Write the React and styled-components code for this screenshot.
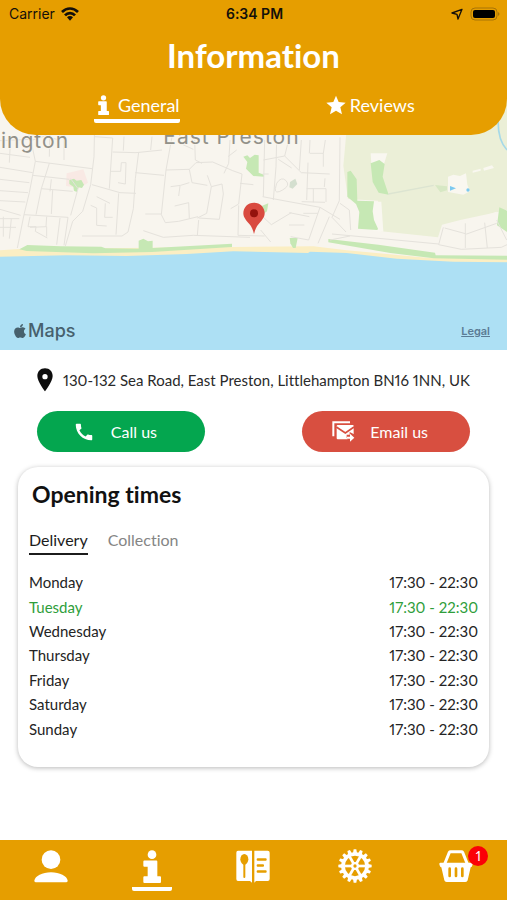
import React, { useState } from 'react';
import styled, { createGlobalStyle } from 'styled-components';
import { FaApple } from 'react-icons/fa';
import { MdCall } from 'react-icons/md';

const ORANGE = '#e69e00';
const SYSTEM_FONT = "Inter, 'Liberation Sans', sans-serif";

const GlobalStyle = createGlobalStyle`
  *, *::before, *::after { box-sizing: border-box; }
  body {
    margin: 0;
    background: #fff;
    color: #1c1c1c;
    font-family: Lato, 'Open Sans', sans-serif;
    font-variant-ligatures: none;
    font-variant-numeric: proportional-nums;
  }
  button { font: inherit; border: 0; padding: 0; background: none; cursor: pointer; }
  svg { display: block; flex: none; }
`;

const Page = styled.div`
  min-height: 100vh;
  display: flex;
  flex-direction: column;
`;

/* ---------- header ---------- */

const Header = styled.header`
  position: relative;
  z-index: 1;
  height: 135px;
  background: ${ORANGE};
  border-radius: 0 0 36px 36px;
  color: #fff;
`;

const StatusBar = styled.div`
  height: 28px;
  padding: 0 7px 0 9px;
  display: grid;
  grid-template-columns: 1fr auto 1fr;
  align-items: center;
  font-family: ${SYSTEM_FONT};
  font-size: 14px;
  line-height: 28px;
  color: #14100a;
`;

const StatusGroup = styled.div`
  display: flex;
  align-items: center;
  gap: 6px;
  justify-content: ${(p) => (p.$end ? 'flex-end' : 'flex-start')};
`;

const Clock = styled.time`
  font-weight: 600;
`;

const Title = styled.h1`
  margin: 0;
  font-size: 33px;
  line-height: 54px;
  font-weight: 700;
  text-align: center;
`;

const HeaderTabs = styled.nav`
  display: grid;
  grid-template-columns: 1fr 1fr;
  justify-items: center;
  padding: 11px 20px 0;
`;

const HeaderTab = styled.button`
  && { padding: 0 0 3px ${(p) => (p.$indent ? '4px' : '0')}; }
  height: 30px;
  display: flex;
  align-items: center;
  gap: ${(p) => (p.$indent ? '9px' : '4px')};
  color: #fff;
  font-size: 18px;
  line-height: 22px;
  border-bottom: 4px solid ${(p) => (p.$active ? '#fff' : 'transparent')};
  border-radius: 2px;
`;

/* ---------- map ---------- */

const MapPanel = styled.section`
  position: relative;
  height: 250px;
  margin-top: -35px;
  background: #ade0f4;
`;

const MapDrawing = styled.svg`
  width: 100%;
  height: 100%;
`;

const MapCaption = styled.div`
  position: absolute;
  inset: auto 17px 7px 12px;
  display: flex;
  justify-content: space-between;
  align-items: center;
  font-family: ${SYSTEM_FONT};
  color: #47616d;
`;

const MapBrand = styled.span`
  display: flex;
  align-items: center;
  font-size: 18px;
  line-height: 24px;
  font-weight: 500;
`;

const LegalLink = styled.a`
  font-size: 11px;
  line-height: 16px;
  font-weight: 600;
  color: #5b7c95;
`;

/* ---------- contact ---------- */

const Content = styled.main`
  flex: 1;
  padding: 18px 18px 24px;
`;

const Address = styled.address`
  display: flex;
  align-items: center;
  gap: 10px;
  padding: 0 19px;
  font-style: normal;
  font-size: 15px;
  line-height: 24px;
  color: #2a2a2a;
  white-space: nowrap;
`;

const Actions = styled.div`
  display: flex;
  justify-content: space-between;
  padding: 0 19px;
  margin: 19px 0 15px;
`;

const ActionButton = styled.button`
  && { padding: 0 ${(p) => (p.$inset ? '42px 0 30px' : '48px 0 36px')}; }
  width: 168px;
  height: 41px;
  display: flex;
  align-items: center;
  justify-content: space-between;
  border-radius: 21px;
  background: ${(p) => p.$color};
  color: #fff;
  font-size: 16px;
  line-height: 20px;
`;

/* ---------- opening times ---------- */

const Card = styled.section`
  min-height: 300px;
  padding: 12px 11px 24px;
  border-radius: 20px;
  background: #fff;
  box-shadow: 0 1px 5px rgba(0, 0, 0, 0.28);
`;

const CardTitle = styled.h2`
  margin: 0 0 18px 3px;
  font-size: 23px;
  line-height: 30px;
  font-weight: 700;
  color: #111;
`;

const CardTabs = styled.div`
  display: flex;
  gap: 20px;
  margin-bottom: 15px;
`;

const CardTab = styled.button`
  height: 28px;
  font-size: 16px;
  line-height: 24px;
  color: ${(p) => (p.$active ? '#1c1c1c' : '#858585')};
  border-bottom: 2px solid ${(p) => (p.$active ? '#1c1c1c' : 'transparent')};
`;

const Hours = styled.table`
  width: 100%;
  height: 171px;
  border-collapse: collapse;
  font-size: 15px;
  line-height: 20px;
`;

const HoursRow = styled.tr`
  color: ${(p) => (p.$today ? '#2f9e3b' : '#242424')};
`;

const Day = styled.th`
  padding: 0;
  font-weight: 400;
  text-align: left;
`;

const Time = styled.td`
  padding: 0;
  text-align: right;
`;

/* ---------- bottom bar ---------- */

const BottomBar = styled.nav`
  height: 60px;
  display: grid;
  grid-template-columns: repeat(5, 1fr);
  justify-items: center;
  background: ${ORANGE};
`;

const BottomItem = styled.button`
  position: relative;
  width: 40px;
  height: 51px;
  display: flex;
  justify-content: center;
  align-items: center;
  color: #fff;
  border-bottom: 4px solid ${(p) => (p.$active ? '#fff' : 'transparent')};
  border-radius: 2px;
  && { padding-top: 5px; }
`;

const Badge = styled.span`
  position: absolute;
  top: 6px;
  right: -12px;
  width: 20px;
  height: 20px;
  border-radius: 50%;
  background: #fb0007;
  color: #fff;
  font-size: 13px;
  line-height: 20px;
  text-align: center;
`;

/* ---------- icons ---------- */

const WifiIcon = () => (
  <svg width="18" height="14" viewBox="0 0 54 42" fill="none" stroke="#14100a" strokeWidth="8" aria-hidden="true">
    <path d="M3 15C17 1 37 1 51 15" />
    <path d="M12 25C20 16 34 16 42 25" />
    <path d="M27 41l-9-10c5-5 13-5 18 0z" fill="#14100a" stroke="none" />
  </svg>
);

const LocationIcon = () => (
  <svg width="12" height="12" viewBox="0 0 36 36" fill="none" stroke="#14100a" strokeWidth="4" strokeLinejoin="round" aria-hidden="true">
    <path d="M33 4L3 15l15 4 3 14z" />
  </svg>
);

const BatteryIcon = () => (
  <svg width="31" height="14" viewBox="0 0 31 14" aria-hidden="true">
    <rect x="2" y="1" width="26" height="12" rx="4" fill="none" stroke="#a87407" />
    <rect x="4" y="3" width="22" height="8" rx="2" fill="#000" />
    <path d="M29 5v4c2-1 2-3 0-4z" fill="#a87407" />
  </svg>
);

const InfoIcon = ({ width, height }) => (
  <svg width={width} height={height} viewBox="0 0 54 98" preserveAspectRatio="none" fill="currentColor" aria-hidden="true">
    <circle cx="27" cy="14" r="13" />
    <path d="M4 31h36q3 0 3 3v44h8q3 0 3 3v14q0 3-3 3H4q-3 0-3-3V81q0-3 3-3h10V50H4q-3 0-3-3V34q0-3 3-3z" />
  </svg>
);

const StarIcon = () => (
  <svg width="20" height="20" viewBox="0 0 60 58" fill="currentColor" aria-hidden="true">
    <path d="M30 1l8 19 21 2-16 14 5 21-18-11-18 11 5-21L1 22l21-2z" />
  </svg>
);

const PlaceIcon = () => (
  <svg width="16" height="24" viewBox="0 0 48 72" aria-hidden="true">
    <path d="M24 1C10 1 1 11 1 24c0 17 23 46 23 46s23-29 23-46C47 11 38 1 24 1zm0 17a8 8 0 110 16 8 8 0 010-16z" fill="#0d0d0d" fillRule="evenodd" />
  </svg>
);

const MailIcon = () => (
  <svg width="23" height="21" viewBox="0 0 69 63" aria-hidden="true">
    <path d="M4 46V4h50" fill="none" stroke="#fff" strokeWidth="6" />
    <rect x="14" y="12" width="51" height="43" rx="3" fill="#fff" />
    <path d="M13 18l27 18 26-18" fill="none" stroke="#d84f40" strokeWidth="5" />
    <path d="M44 50V41h9v-8l16 8v22H50z" fill="#d84f40" />
    <path d="M45 47h9v-9l13 12-13 12v-9h-9z" fill="#fff" />
  </svg>
);

const PersonIcon = () => (
  <svg width="34" height="33" viewBox="0 0 102 99" fill="currentColor" aria-hidden="true">
    <circle cx="51" cy="29" r="28" />
    <path d="M1 92c2-14 24-25 50-25s48 11 50 25q0 5-5 5H6q-5 0-5-5z" />
  </svg>
);

const MenuBookIcon = () => (
  <svg width="34" height="33" viewBox="0 0 102 99" aria-hidden="true">
    <path d="M6 2h42v96L42 93H6q-5 0-5-6V8q0-6 5-6zM55 2h40q6 0 6 6v79q0 6-6 6H60L55 98z" fill="#fff" />
    <g fill={ORANGE}>
      <ellipse cx="25" cy="28" rx="12" ry="16" />
      <rect x="22" y="40" width="6" height="44" rx="3" />
      <rect x="62" y="25" width="30" height="7" rx="3" />
      <rect x="62" y="43" width="22" height="7" rx="3" />
      <rect x="62" y="61" width="30" height="7" rx="3" />
    </g>
  </svg>
);

const TEETH = Array.from({ length: 16 }, (_, i) => i * 22.5);
const SPOKES = [0, 60, 120];

const GearIcon = () => (
  <svg width="34" height="34" viewBox="-51 -51 102 102" fill="none" stroke="currentColor" aria-hidden="true">
    <circle r="36" strokeWidth="11" />
    {TEETH.map((a) => (
      <path key={a} d="M-6-39L-4-50H4L6-39z" fill="currentColor" stroke="none" transform={`rotate(${a})`} />
    ))}
    {SPOKES.map((a) => (
      <path key={a} d="M-32 0H32" strokeWidth="8" transform={`rotate(${a})`} />
    ))}
    <circle r="12" fill="currentColor" stroke="none" />
    <circle r="5" fill={ORANGE} stroke="none" />
  </svg>
);

const BasketIcon = () => (
  <svg width="34" height="33" viewBox="0 0 102 99" aria-hidden="true">
    <path d="M17 42L31 7q1-2 4-2h32q3 0 4 2l14 35" fill="none" stroke="#fff" strokeWidth="9" />
    <path d="M4 38h94q4 0 3 5l-2 6q-1 3-4 3l-9 39q-1 5-7 5H23q-6 0-7-5L7 52q-3 0-4-3l-2-6q-1-5 3-5z" fill="#fff" />
    <path d="M32 56v22M51 56v22M70 56v22" stroke={ORANGE} strokeWidth="8" strokeLinecap="round" />
  </svg>
);

/* ---------- map drawing: three units to one pixel ---------- */

const CoastMap = () => (
  <MapDrawing viewBox="0 -60 1521 750" preserveAspectRatio="xMidYMid slice" role="img" aria-label="Map of East Preston">
    <rect y="-60" width="1521" height="500" fill="#f8f5ee" />
    <path d="M200 160l50-12 14 40-24 16-42-6z" fill="#f9e9e4" />
    <path d="M1048-60h473v330l-140 30-55 14-12 38-170-18-10-92-90-5-14-100z" fill="#ebefd7" />
    <path d="M1112 100l50 0-10 32h-38zM1120 245l24 0 6 90-32-2zM1344 170l16-6 20 4 18-8 4 34 8 20-20 10-46-8zM1418 152l24-6v6l-24 6zM1450 144l26-8 6 8-30 8z" fill="#f9f7f0" />
    <path d="M1330 320l50-15 80-20 30-10 31 40v98l-210-30z" fill="#f8f5ee" />
    <path d="M0 391l60-4 640-6 240-2 100 12 240 22 241 2v30H0z" fill="#fbeec3" />

    <g fill="#c6e8b4">
      <path d="M208 180l14-4 8 6 14-2 8 14-6 10-10-2-6 14-8-4-2-12-12-8z" />
      <path d="M58 388l24-13 100 4 122 1 12 5 100 1v-24l14-6 14 8 14-2v22l238-13v10l-240 15-176 4-200-7z" />
      <path d="M730 110l12-4 8 8 14-10 12 2v52l16 6v6l-32-2-22-22 4-20z" />
      <path d="M785 258l20-8-4 24-14 10z" />
      <path d="M869 354h24l-6 30h-8l-8-14z" />
      <path d="M1042 156l10-4 18 26 2 64 50 2-4 30 4 26 12 26-2 4-58-4 4-50-10-24-26-22z" />
      <path d="M1112 130l26-10 16 12-6 38 18 54-30-6-18-32z" />
      <path d="M985 357l150 17 170 24 2 8 214 1v12l-220-4-130-16-186-32z" />
      <path d="M1498 262l23 10v64l-30-20z" />
      <path d="M1305 195l36 4v12l-20 6z" fill="#d7e8c4" />
      <path d="M870 186l16-10 6 16-14 14-10-4z" fill="#d4dfcf" />
    </g>

    <g fill="none" stroke="#e5e2dc" strokeWidth="3" strokeLinejoin="round">
      <path d="M0 62l92-4 14 66 170 22M0 100l90 12M0 142l98 16M0 178l88 10M0 212l84 6M0 242l76 4M106 124L88 218 72 284 52 384M98 166l110 12M32 50l-4 78M80 20l12 42 44-14 40 12M150 10l-2 100M192 10v110M284 10l-2 100-10 84-24 80-30 30-22 74" />
      <path d="M148 130l-24 76-16 78M124 206l94 8M158 210l-4 72M154 178l-4 36M212 176l22 30-22 80M72 284l132 8M204 292l-12 84M180 294l-10 80M0 268l62 18M0 296h58M0 322h48M34 296l-6 60M10 290v60M90 290l-6 30h24l-2 14 36 20M90 322l50-2v30M140 290l-2 30" />
      <path d="M284 50l54 4-10 152M338 96l70 2 78-8M372 50l-2 42M332 154h30l2-26h14l-2 64-22-4M276 194l84 24 48 2M416 96l-10 80-6 90-16 70-18 12H246M356 220l-8 124M272 256l18 8v52l30 2M316 250l-2 42h24M290 230l40 20" />
      <path d="M406 158l86 8M516 50l-18 100-14 134 12 24 40-4 58-14M498 150l70-2M568 148l20-20 50-2 60 26 28 10-10 90-24 14M512 200l30-4 26-8M540 198l-4 30M524 258l42-10 2 48M436 282h48M568 148l8 40 46 8M622 166l12 34-14 80-28 14M634 200l32-8 4 30-12 76-62-4M596 300l-4 46M430 332l60 20 90-6 170 6M584 60l2 60 20 10M690 60l-4 70-14 30M710 90l-26 20M720 190l40 4M716 256l-2 90 80 2M456 50l-4 40M540 70l40 18" />
      <path d="M794 60l-4 170M830 60l-2 80-8 100M790 120l64-12 12-48M854 108l50 50 85 4M904 60l-6 90M930 60l-2 40M930 100h40v40M970 100l6-40M835 118l40 26M788 162h18M788 230l52 10 120 22 60 36M830 190q14-22 28-8t-10 28-22-4zM924 128l-4 112M920 206h58v40M940 205v42M905 245l70 2M975 175l-2 26M910 280h44M867 315h46M788 290l26 24 60-36M960 262l-34 98-54-10M928 290l-60-12M988 290l-34 80" />
      <path d="M1020 52l-2 190-22 50 42 44M1020 250l28 20 4 60M996 342l150 14 170 16M990 360l60-12M1330 322l-14 52 68 14 120-6 17-8M1334 324l66 18 90-32M1396 310v74M1454 308l8 76M1490 300l30 60M782 330l30 36" />
    </g>
    <path d="M1165 222l136-26" fill="none" stroke="#dce4d1" strokeWidth="4" />
    <path d="M1496-20q-8 74 25 110" fill="none" stroke="#a5d9e8" strokeWidth="5" />
    <path d="M1350 198l18 7-18 7z" fill="#7cc9ef" />
    <circle cx="1404" cy="210" r="5" fill="#7cc9ef" />

    <path d="M0 410L200 406 380 408 560 402 700 394 924 399 930 395 1040 399 1190 416 1360 425 1521 427V690H0z" fill="#ade0f4" />

    <g fontFamily={SYSTEM_FONT} fontSize="63" letterSpacing="3" fill="#929189" stroke="#f8f5ee" strokeWidth="5" paintOrder="stroke">
      <text x="3" y="83">ington</text>
      <text x="490" y="71">East Preston</text>
    </g>

    <path d="M762 248c-19 0-32 14-32 32 0 12 9 22 18 32 7 8 11 18 14 30 3-12 7-22 14-30 9-10 18-20 18-32 0-18-13-32-32-32z" fill="#d94a3f" />
    <circle cx="762" cy="280" r="12" fill="#94120c" />
  </MapDrawing>
);

/* ---------- data ---------- */

const DAYS = ['Monday', 'Tuesday', 'Wednesday', 'Thursday', 'Friday', 'Saturday', 'Sunday'];
const TODAY = 'Tuesday';

const SECTIONS = [
  { label: 'Account', icon: <PersonIcon /> },
  { label: 'Information', icon: <InfoIcon width={18} height={33} />, active: true },
  { label: 'Menu', icon: <MenuBookIcon /> },
  { label: 'Settings', icon: <GearIcon /> },
  { label: 'Basket', icon: <BasketIcon />, count: 1 },
];

export default function App() {
  const [service, setService] = useState('Delivery');

  return (
    <Page>
      <GlobalStyle />
      <Header>
        <StatusBar>
          <StatusGroup>
            Carrier
            <WifiIcon />
          </StatusGroup>
          <Clock>6:34 PM</Clock>
          <StatusGroup $end>
            <LocationIcon />
            <BatteryIcon />
          </StatusGroup>
        </StatusBar>
        <Title>Information</Title>
        <HeaderTabs>
          <HeaderTab type="button" $active $indent>
            <InfoIcon width={11} height={20} />
            General
          </HeaderTab>
          <HeaderTab type="button">
            <StarIcon />
            Reviews
          </HeaderTab>
        </HeaderTabs>
      </Header>

      <MapPanel>
        <CoastMap />
        <MapCaption>
          <MapBrand>
            <FaApple size={16} aria-hidden="true" />
            Maps
          </MapBrand>
          <LegalLink href="#legal">Legal</LegalLink>
        </MapCaption>
      </MapPanel>

      <Content>
        <Address>
          <PlaceIcon />
          130-132 Sea Road, East Preston, Littlehampton BN16 1NN, UK
        </Address>
        <Actions>
          <ActionButton type="button" $color="#04a64f">
            <MdCall size={22} aria-hidden="true" />
            Call us
          </ActionButton>
          <ActionButton type="button" $color="#d84f40" $inset>
            <MailIcon />
            Email us
          </ActionButton>
        </Actions>

        <Card>
          <CardTitle>Opening times</CardTitle>
          <CardTabs>
            {['Delivery', 'Collection'].map((name) => (
              <CardTab key={name} type="button" $active={service === name} onClick={() => setService(name)}>
                {name}
              </CardTab>
            ))}
          </CardTabs>
          <Hours>
            <tbody>
              {DAYS.map((day) => (
                <HoursRow key={day} $today={day === TODAY}>
                  <Day scope="row">{day}</Day>
                  <Time>17:30 - 22:30</Time>
                </HoursRow>
              ))}
            </tbody>
          </Hours>
        </Card>
      </Content>

      <BottomBar>
        {SECTIONS.map(({ label, icon, active, count }) => (
          <BottomItem key={label} type="button" aria-label={label} $active={active}>
            {icon}
            {count && <Badge>{count}</Badge>}
          </BottomItem>
        ))}
      </BottomBar>
    </Page>
  );
}
